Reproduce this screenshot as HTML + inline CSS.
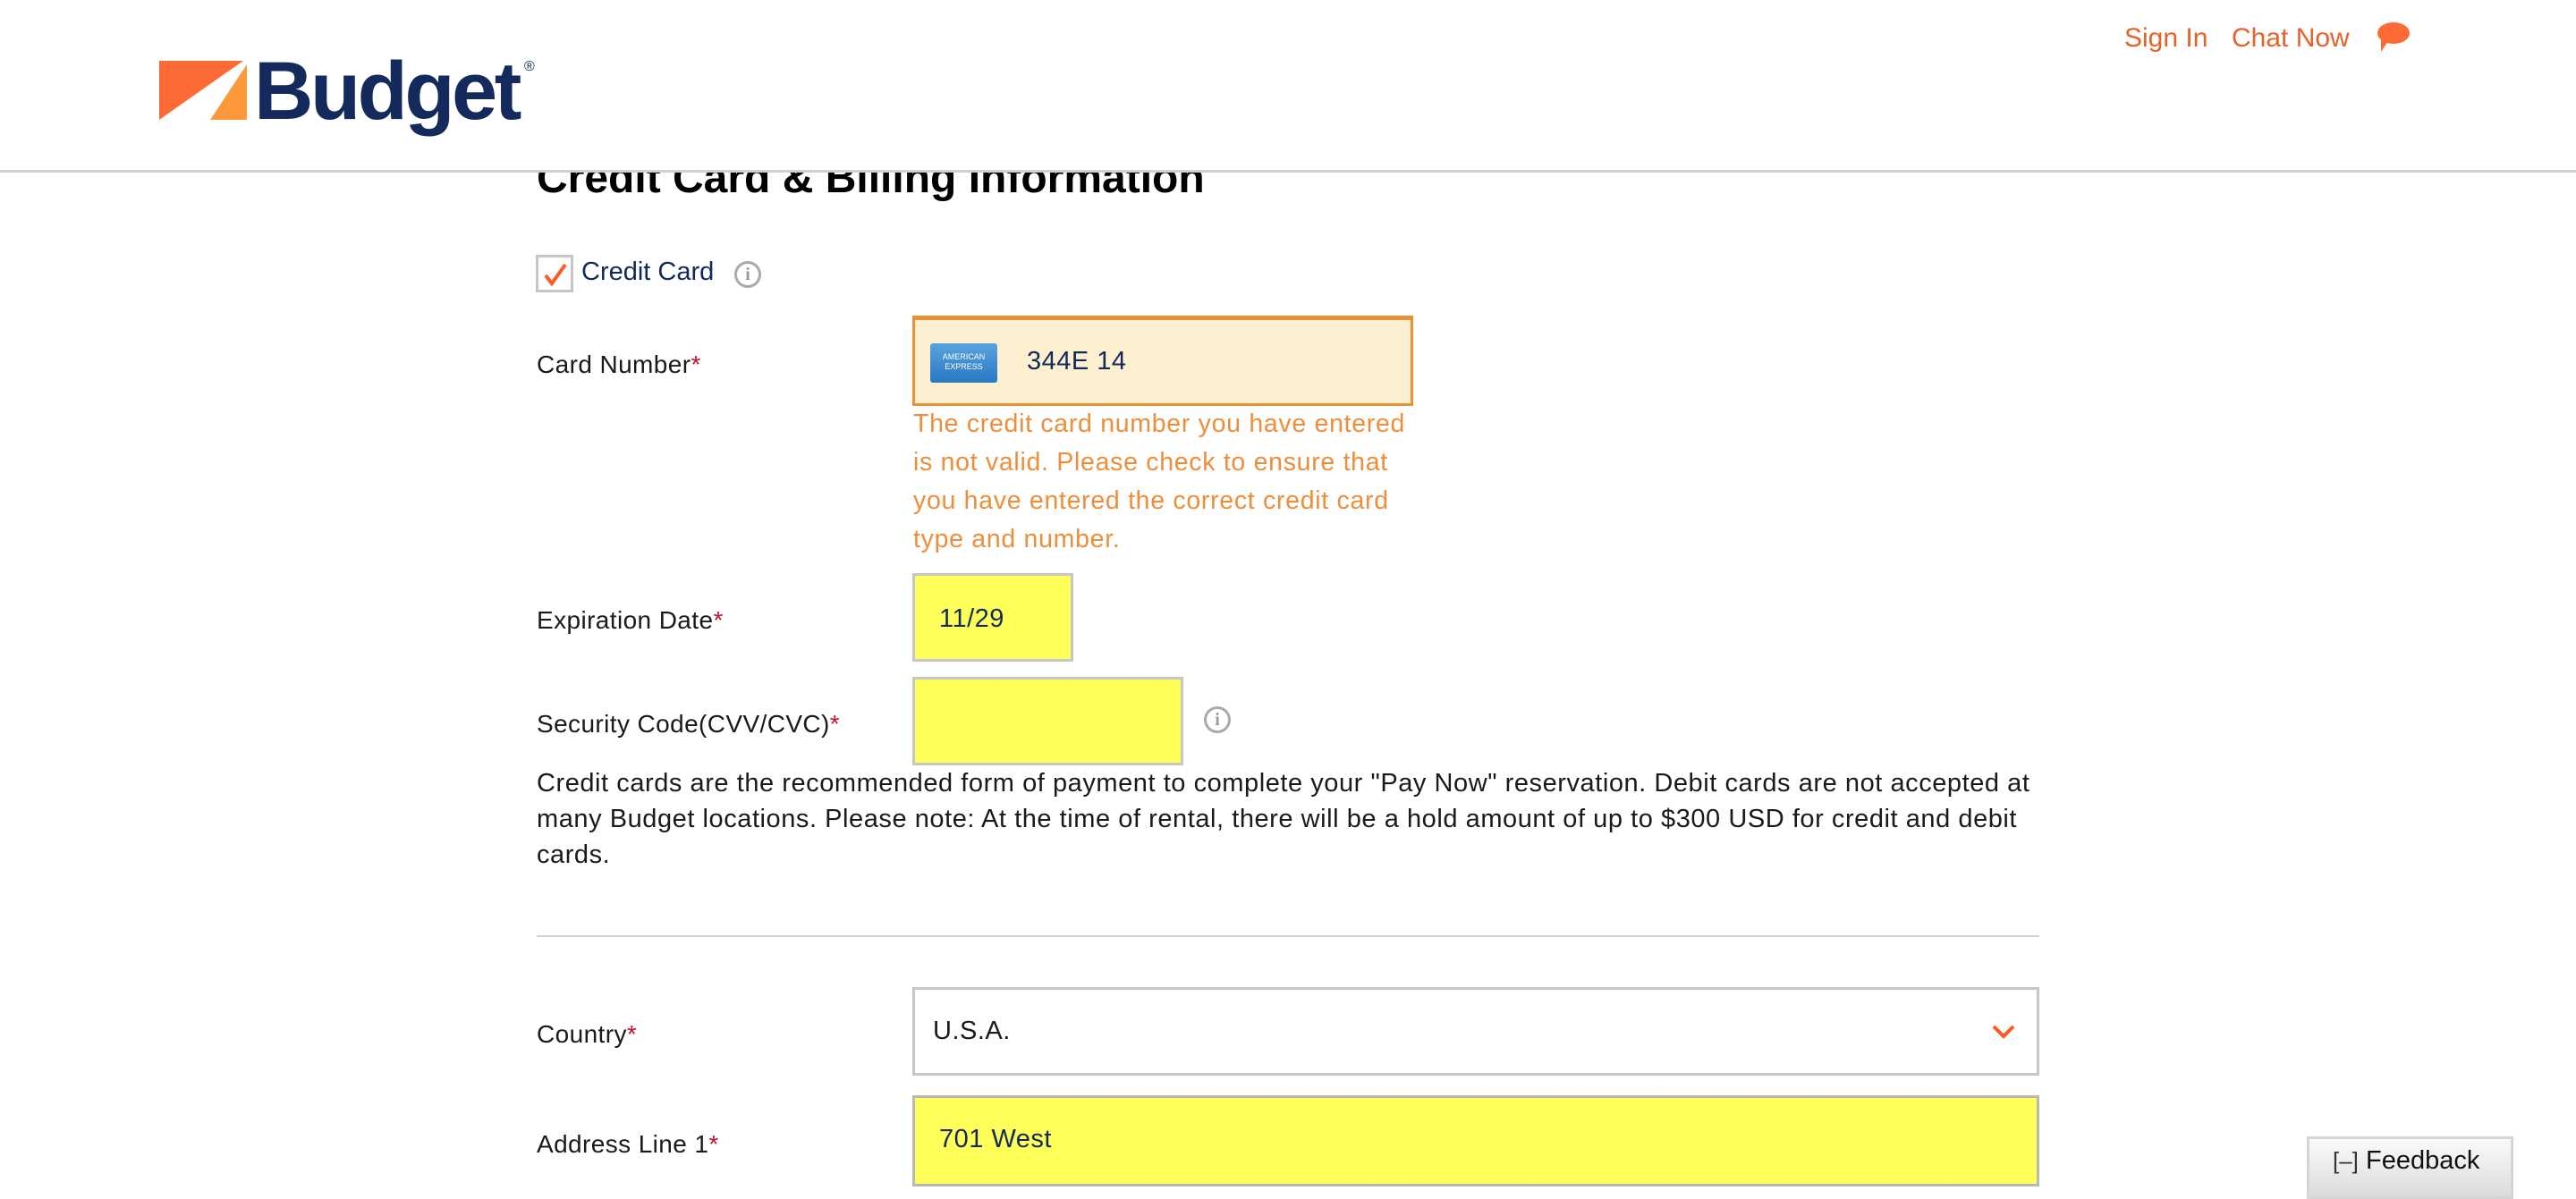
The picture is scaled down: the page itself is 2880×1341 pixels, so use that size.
<!DOCTYPE html>
<html><head><meta charset="utf-8"><style>
*{margin:0;padding:0;box-sizing:border-box}
body{width:2880px;height:1334px;overflow:hidden;background:#fff;font-family:"Liberation Sans",sans-serif;color:#1a1a1a;position:relative}
.abs{position:absolute}
.hdr{position:absolute;left:0;top:0;width:2880px;height:193px;background:#fff;border-bottom:3px solid #cfcfcf;z-index:5}
.lbl{position:absolute;left:600px;font-size:28px;line-height:34px;letter-spacing:0.4px}
.req{color:#c8102e}
.inp{position:absolute;left:1020px;border:3px solid #c6c6c6;background:#ffff5a;font-size:29px;color:#13295a;letter-spacing:0.5px}
.info{position:absolute;width:30px;height:30px;border:3px solid #aaa;border-radius:50%;color:#999;font-size:20px;font-weight:bold;text-align:center;line-height:24px;font-family:"Liberation Serif",serif}
</style></head><body>
<div class="abs" style="left:600px;top:172px;font-size:48px;font-weight:bold;color:#000">Credit Card &amp; Billing Information</div>
<div class="hdr">
 <svg class="abs" style="left:178px;top:68px" width="100" height="66" viewBox="0 0 100 66">
  <polygon points="0,0 94,0 0,66" fill="#fc6a35"/>
  <polygon points="98,4 98,66 57,66" fill="#fe983a"/>
 </svg>
 <div class="abs" style="left:284px;top:47px;font-size:92px;font-weight:bold;color:#142a5c;letter-spacing:-3.5px;line-height:110px">Budget</div>
 <div class="abs" style="left:586px;top:66px;font-size:16px;color:#142a5c">®</div>
 <div class="abs" style="left:2375px;top:26px;font-size:30px;color:#e5622a">Sign In</div>
 <div class="abs" style="left:2495px;top:26px;font-size:30px;color:#e5622a">Chat Now</div>
 <svg class="abs" style="left:2656px;top:24px" width="40" height="36" viewBox="0 0 40 36"><ellipse cx="20" cy="13" rx="18" ry="12" fill="#fc6a35"/><polygon points="6,20 14,22 6,34" fill="#fc6a35"/></svg>
</div>
<div class="abs" style="left:599px;top:285px;width:42px;height:42px;border:3px solid #c6c6c6;background:#fff"></div>
<svg class="abs" style="left:606px;top:292px" width="30" height="30" viewBox="0 0 30 30"><polyline points="4,16 11,25 26,4" fill="none" stroke="#fc5a25" stroke-width="4"/></svg>
<div class="abs" style="left:650px;top:288px;font-size:29px;color:#13295a">Credit Card</div>
<div class="info" style="left:821px;top:292px">i</div>
<div class="lbl" style="top:391px">Card Number<span class="req">*</span></div>
<div class="abs" style="left:1020px;top:353px;width:560px;height:101px;border:3px solid #ea9037;border-top-width:5px;background:#fdf0d0"></div>
<div class="abs" style="left:1040px;top:384px;width:75px;height:44px;background:linear-gradient(#5aa3e0,#2a78c4);border-radius:3px;color:#fff;font-size:9px;text-align:center;padding-top:10px;line-height:11px">AMERICAN<br>EXPRESS</div>
<div class="abs" style="left:1148px;top:388px;font-size:29px;color:#13295a;letter-spacing:0.5px">344E 14</div>
<div class="abs" style="left:1021px;top:453px;width:560px;font-size:28.5px;line-height:43px;color:#ef8e3a;letter-spacing:0.7px">The credit card number you have entered is not valid. Please check to ensure that you have entered the correct credit card type and number.</div>
<div class="lbl" style="top:677px">Expiration Date<span class="req">*</span></div>
<div class="inp" style="top:641px;width:180px;height:99px;padding:32px 0 0 27px">11/29</div>
<div class="lbl" style="top:793px">Security Code(CVV/CVC)<span class="req">*</span></div>
<div class="inp" style="top:757px;width:303px;height:99px"></div>
<div class="info" style="left:1346px;top:790px">i</div>
<div class="abs" style="left:600px;top:856px;width:1690px;font-size:29px;line-height:40px;letter-spacing:0.55px">Credit cards are the recommended form of payment to complete your "Pay Now" reservation. Debit cards are not accepted at many Budget locations. Please note: At the time of rental, there will be a hold amount of up to $300 USD for credit and debit cards.</div>
<div class="abs" style="left:600px;top:1046px;width:1680px;height:2px;background:#d0d0d0"></div>
<div class="lbl" style="top:1140px">Country<span class="req">*</span></div>
<div class="abs" style="left:1020px;top:1104px;width:1260px;height:99px;border:3px solid #c6c6c6;background:#fff;font-size:29px;padding:30px 0 0 20px;letter-spacing:0.5px">U.S.A.</div>
<svg class="abs" style="left:2226px;top:1145px" width="28" height="18" viewBox="0 0 28 18"><polyline points="3,3 14,14 25,3" fill="none" stroke="#fc5a25" stroke-width="4"/></svg>
<div class="lbl" style="top:1263px">Address Line 1<span class="req">*</span></div>
<div class="inp" style="top:1225px;width:1260px;height:102px;padding:30px 0 0 27px;border-color:#b8b8b8">701 West</div>
<div class="abs" style="left:2579px;top:1271px;width:231px;height:70px;border:3px solid #d5d5d5;background:linear-gradient(#fafafa,#dcdcdc);font-size:29px;padding:8px 0 0 26px;color:#111"><span style="font-size:26px;color:#333">[–]</span> Feedback</div>
</body></html>
